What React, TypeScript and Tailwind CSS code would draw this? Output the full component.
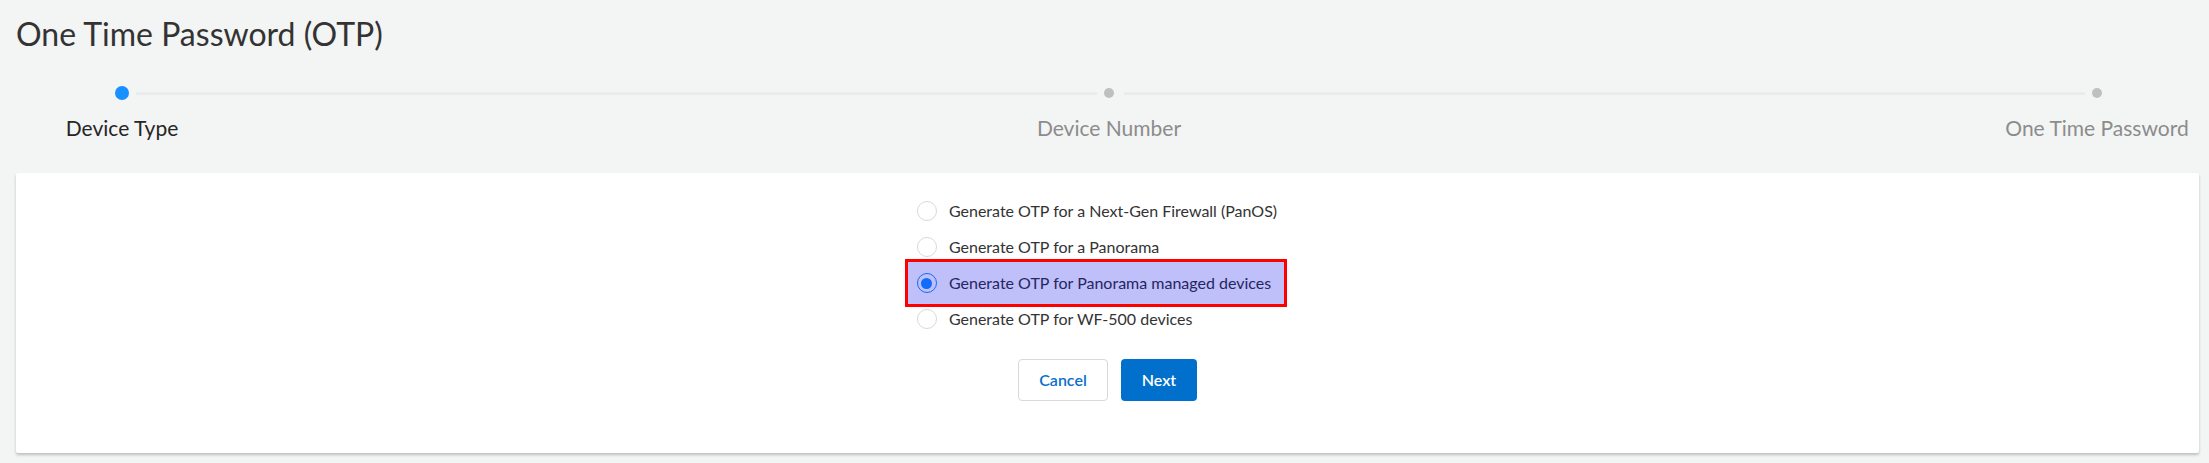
import React from "react";

const options = [
  "Generate OTP for a Next-Gen Firewall (PanOS)",
  "Generate OTP for a Panorama",
  "Generate OTP for Panorama managed devices",
  "Generate OTP for WF-500 devices",
];

function Step({ label, active }: { label: string; active?: boolean }) {
  return (
    <div className="flex flex-col items-center w-[14px] shrink-0">
      <div className="h-[14px] w-[14px] flex items-center justify-center">
        {active ? (
          <div className="h-[14px] w-[14px] rounded-full bg-[#1890ff]" />
        ) : (
          <div className="h-[10px] w-[10px] rounded-full bg-[#bfbfbf]" />
        )}
      </div>
      <div className="w-0 flex justify-center mt-[14px]">
        <span
          className={`whitespace-nowrap text-[21px] leading-[28px] ${
            active ? "text-[#262626]" : "text-[#8c8c8c]"
          }`}
        >
          {label}
        </span>
      </div>
    </div>
  );
}

function Radio({ checked }: { checked?: boolean }) {
  return (
    <span
      className={`h-[20px] w-[20px] rounded-full border bg-white flex items-center justify-center shrink-0 ${
        checked ? "border-[#1890ff]" : "border-[#d9d9d9]"
      }`}
    >
      {checked && <span className="h-[11px] w-[11px] rounded-full bg-[#1890ff]" />}
    </span>
  );
}

export default function App() {
  const selected = 2;
  return (
    <div className="min-h-screen w-full bg-[#f3f4f4] font-['Lato',sans-serif] pb-[10px]">
      <h1 className="px-[16px] pt-[14px] text-[32px] leading-[40px] text-[#333333] font-normal">
        One Time Password (OTP)
      </h1>

      {/* stepper */}
      <div className="flex items-start pl-[115px] pr-[105px] mt-[32px]">
        <Step label="Device Type" active />
        <div className="flex-1 h-[3px] bg-[#ebebeb] mt-[6px] ml-[7px] mr-[5px]" />
        <Step label="Device Number" />
        <div className="flex-1 h-[3px] bg-[#ebebeb] mt-[6px] ml-[8px] mr-[5px]" />
        <Step label="One Time Password" />
      </div>

      {/* card */}
      <div className="ml-[16px] mr-[10px] mt-[31px] bg-white rounded-[2px] shadow-[0_2px_3px_rgba(0,0,0,0.22)] pt-[20px] pb-[52px] flex flex-col items-center">
        <div className="flex flex-col mr-[21px]">
          {options.map((opt, i) => (
            <label
              key={opt}
              className="relative h-[36px] flex items-center gap-[12px] text-[16px] text-[#333333] cursor-pointer"
            >
              <Radio checked={i === selected} />
              <span className="whitespace-nowrap">{opt}</span>
              {i === selected && (
                <span className="absolute -left-[12px] -right-[10px] -top-[6px] -bottom-[6px] border-[3px] border-[#ff0000] bg-[rgba(0,0,230,0.25)] pointer-events-none" />
              )}
            </label>
          ))}
        </div>
        <div className="flex gap-[13px] mt-[22px]">
          <button className="h-[42px] w-[90px] rounded-[4px] border border-[#d9d9d9] bg-white text-[16px] font-semibold text-[#0b6fcc]">
            Cancel
          </button>
          <button className="h-[42px] w-[76px] rounded-[4px] bg-[#0070cc] text-[16px] font-semibold text-white">
            Next
          </button>
        </div>
      </div>
    </div>
  );
}
